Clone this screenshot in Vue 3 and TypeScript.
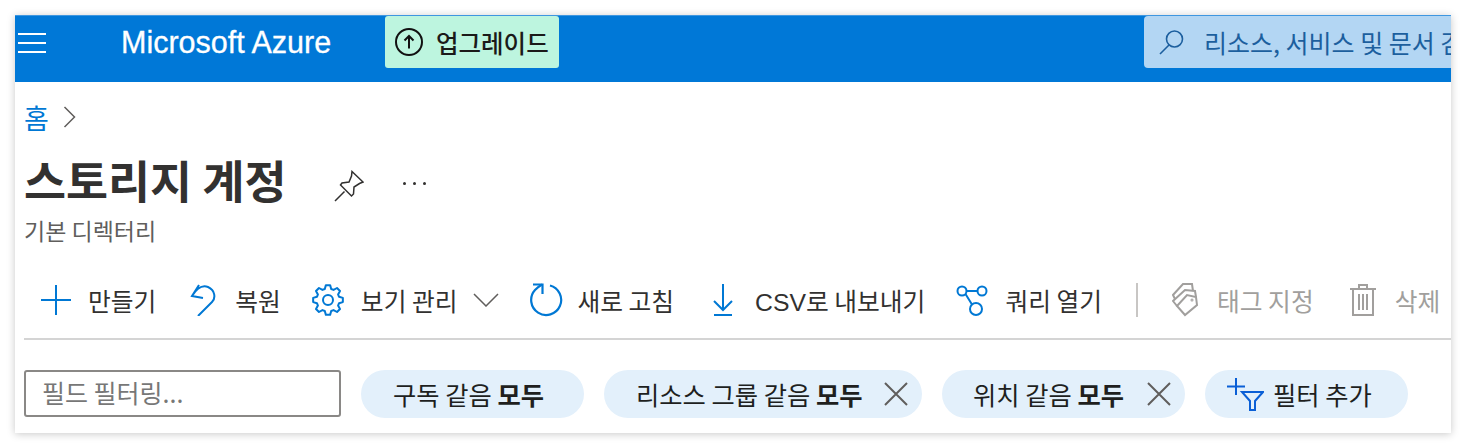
<script setup lang="ts">
function gear(cx: number, cy: number): string {
  const teeth = 8
  const outer = 15
  const inner = 11.5
  const pts: string[] = []
  for (let i = 0; i < teeth; i++) {
    const a = (i * Math.PI * 2) / teeth - Math.PI / 2
    const step = (Math.PI * 2) / teeth
    const list: [number, number][] = [
      [inner, a - step * 0.36],
      [outer, a - step * 0.18],
      [outer, a + step * 0.18],
      [inner, a + step * 0.36]
    ]
    for (const [r, t] of list) {
      pts.push(`${(cx + r * Math.cos(t)).toFixed(2)} ${(cy + r * Math.sin(t)).toFixed(2)}`)
    }
  }
  return 'M' + pts.join('L') + 'Z'
}
const gearPath = gear(17, 17)
</script>

<template>
  <div class="page">
    <div class="panel">
      <header class="topbar">
        <div class="burger"><span></span><span></span><span></span></div>
        <div class="brand">Microsoft Azure</div>
        <div class="upgrade">
          <svg width="30" height="30" viewBox="0 0 30 30" fill="none" stroke="#111" stroke-width="2">
            <circle cx="15" cy="15" r="13" />
            <path d="M15 21.5V9.5M10.5 13.5L15 9l4.500 4.500" />
          </svg>
          <span>업그레이드</span>
        </div>
        <div class="search">
          <svg width="26" height="26" viewBox="0 0 26 26" fill="none" stroke="#1c5f9e" stroke-width="1.600">
            <circle cx="15.500" cy="10" r="8" />
            <path d="M10 16L1 25" />
          </svg>
          <span>리소스, 서비스 및 문서 검색(G+/)</span>
        </div>
      </header>

      <nav class="crumbs">
        <a>홈</a>
        <svg width="13" height="22" viewBox="0 0 13 22" fill="none" stroke="#605e5c" stroke-width="1.500">
          <path d="M1.500 1L11.500 11L1.500 21" />
        </svg>
      </nav>

      <div class="title-row">
        <h1>스토리지 계정</h1>
        <svg class="pin" width="30" height="32" viewBox="0 0 30 32" fill="none" stroke="#323130" stroke-width="1.500">
          <path d="M1 31L10.500 21.500M18 1.500L29 12L25.500 13.500L20 17L19.500 24L17.500 26L6.500 15L8 13L15 12L17.500 6Z" />
        </svg>
        <div class="dots"><i></i><i></i><i></i></div>
      </div>
      <div class="subtitle">기본 디렉터리</div>

      <div class="toolbar">
        <button class="tool create">
          <svg width="32" height="32" viewBox="0 0 32 32" fill="none" stroke="#0078d4" stroke-width="2">
            <path d="M16 1V31M1 16H31" />
          </svg>
          <span>만들기</span>
        </button>
        <button class="tool restore">
          <svg width="28" height="32" viewBox="0 0 28 32" fill="none" stroke="#0078d4" stroke-width="2">
            <path d="M10 1L3 12L14 14M3 12C8 4 14 1 19 3C26 6 27 14 23 18L9 32" />
          </svg>
          <span>복원</span>
        </button>
        <button class="tool views">
          <svg width="34" height="34" viewBox="0 0 34 34" fill="none" stroke="#0078d4" stroke-width="2">
            <path :d="gearPath" stroke-linejoin="round" />
            <circle cx="17" cy="17" r="5" />
          </svg>
          <span>보기 관리</span>
          <svg width="26" height="14" viewBox="0 0 26 14" fill="none" stroke="#605e5c" stroke-width="1.500">
            <path d="M1 1L13 13L25 1" />
          </svg>
        </button>
        <button class="tool refresh">
          <svg width="34" height="34" viewBox="0 0 34 34" fill="none" stroke="#0078d4" stroke-width="2.200">
            <path d="M21 2.500A15 15 0 1 1 6 7C8 5 10.500 3 13 1.500" />
            <path d="M4 1.500H13.500V11" />
          </svg>
          <span>새로 고침</span>
        </button>
        <button class="tool export">
          <svg width="20" height="32" viewBox="0 0 20 32" fill="none" stroke="#0078d4" stroke-width="2">
            <path d="M10 0V26M1 17L10 26L19 17" />
            <path d="M1 31H19" />
          </svg>
          <span><span class="latin">CSV</span>로 내보내기</span>
        </button>
        <button class="tool query">
          <svg width="34" height="34" viewBox="0 0 34 34" fill="none" stroke="#0078d4" stroke-width="2">
            <circle cx="7" cy="8" r="4.500" />
            <circle cx="27" cy="8" r="4.500" />
            <circle cx="21" cy="26" r="6" />
            <path d="M11.500 8H22.500M10.500 11L17 21.500" />
          </svg>
          <span>쿼리 열기</span>
        </button>
        <i class="vsep"></i>
        <button class="tool off tag">
          <svg width="28" height="34" viewBox="0 0 28 34" fill="none" stroke="#a19f9d" stroke-width="2">
            <path d="M5 23L15 12L24 14L25 22L13 32Z" />
            <path d="M5 23L1 18L13 7L23 8L24 14" />
            <path d="M3 16L1 12L11 1L20 1L21 8" />
            <circle cx="20" cy="17" r="0.500" />
          </svg>
          <span>태그 지정</span>
        </button>
        <button class="tool off trash">
          <svg width="26" height="32" viewBox="0 0 26 32" fill="none" stroke="#a19f9d" stroke-width="2">
            <path d="M0 5H26M9 5V1H17V5M3 5V31H23V5M9 10V26M13 10V26M17 10V26" />
          </svg>
          <span>삭제</span>
        </button>
      </div>

      <div class="filters">
        <div class="field">필드 필터링...</div>
        <div class="pill p1">구독 같음&nbsp;<b>모두</b></div>
        <div class="pill p2">
          <span>리소스 그룹 같음&nbsp;<b>모두</b></span>
          <svg width="24" height="24" viewBox="0 0 24 24" fill="none" stroke="#605e5c" stroke-width="2">
            <path d="M1 1L23 23M23 1L1 23" />
          </svg>
        </div>
        <div class="pill p3">
          <span>위치 같음&nbsp;<b>모두</b></span>
          <svg width="24" height="24" viewBox="0 0 24 24" fill="none" stroke="#605e5c" stroke-width="2">
            <path d="M1 1L23 23M23 1L1 23" />
          </svg>
        </div>
        <div class="pill p4">
          <svg width="37" height="33" viewBox="0 0 37 33" fill="none" stroke="#0a5fd6" stroke-width="2">
            <path d="M9 0V17M0 8.500H18" />
            <path d="M15 14H36L28 23V32H23V23Z" />
          </svg>
          <span>필터 추가</span>
        </div>
      </div>
    </div>
  </div>
</template>

<style>
body {
  margin: 0;
  background: #fff;
}
</style>

<style scoped>
.page {
  padding: 15px;
  width: 1436px;
  height: 418px;
  font-family: "Noto Sans CJK KR", "Liberation Sans", sans-serif;
  color: #323130;
}
.panel {
  width: 1436px;
  height: 418px;
  overflow: hidden;
  background: #fff;
  box-shadow: 0 1px 8px rgba(0, 0, 0, 0.22);
}
.topbar {
  height: 67px;
  box-sizing: border-box;
  background: #0078d7;
  border-top: 1px solid #3f97e0;
  display: flex;
  align-items: flex-start;
}
.topbar > * {
  flex: none;
}
.burger {
  width: 28px;
  margin: 17px 0 0 3px;
  display: flex;
  flex-direction: column;
  gap: 7px;
}
.burger span {
  height: 2px;
  background: #fff;
}
.brand {
  margin: 7px 0 0 75px;
  width: 264px;
  font: 30.500px/38px "Liberation Sans", sans-serif;
  -webkit-text-stroke: 0.3px #fff;
  color: #fff;
  white-space: nowrap;
}
.upgrade {
  box-sizing: border-box;
  width: 174px;
  height: 52px;
  background: #bdf5df;
  border-radius: 3px;
  display: flex;
  align-items: center;
  padding-left: 9px;
  gap: 12px;
  font-size: 24.500px;
  font-weight: 500;
  color: #1b1a19;
  white-space: nowrap;
}
.search {
  margin-left: 585px;
  width: 420px;
  height: 52px;
  background: #b3d6f3;
  border-radius: 4px 0 0 4px;
  display: flex;
  align-items: center;
  padding-left: 15px;
  gap: 19px;
  font-size: 25px;
  color: #1c5f9e;
  white-space: nowrap;
}
.crumbs {
  height: 50px;
  display: flex;
  align-items: center;
  padding-left: 9px;
  gap: 14px;
  color: #0078d4;
  font-size: 27px;
  margin-top: 10px;
}
.title-row {
  height: 48px;
  padding-left: 9px;
  margin-top: 13px;
  display: flex;
  align-items: center;
}
h1 {
  margin: 0;
  font-size: 45.700px;
  line-height: 48px;
  font-weight: 700;
  white-space: nowrap;
}
.pin {
  margin-left: 47px;
  margin-top: 13px;
}
.dots {
  margin-left: 39px;
  margin-top: 8px;
  display: flex;
  gap: 7px;
}
.dots i {
  width: 3px;
  height: 3px;
  border-radius: 50%;
  background: #323130;
}
.subtitle {
  margin: 11px 0 0 9px;
  font-size: 23px;
  line-height: 32px;
  color: #605e5c;
}
.toolbar {
  height: 40px;
  margin-top: 34px;
  display: flex;
  align-items: center;
}
.tool {
  all: unset;
  display: flex;
  align-items: center;
  gap: 16px;
  font-size: 24.750px;
  white-space: nowrap;
  font-family: inherit;
}
.latin {
  font-family: "Liberation Sans", sans-serif;
}
.create { margin-left: 25px; }
.restore { margin-left: 33px; gap: 18px; }
.views { margin-left: 30px; }
.refresh { margin-left: 30px; gap: 14px; }
.export { margin-left: 39px; gap: 22px; }
.query { margin-left: 30px; }
.vsep {
  width: 2px;
  height: 34px;
  background: #c8c6c4;
  margin-left: 34px;
}
.off { color: #a19f9d; }
.tag { margin-left: 34px; gap: 17px; }
.trash { margin-left: 36px; gap: 19px; }
.filters {
  margin: 18px 0 0 9px;
  border-top: 2px solid #d4d4d4;
  padding-top: 30px;
  display: flex;
  align-items: flex-start;
  gap: 20px;
}
.field {
  box-sizing: border-box;
  width: 317px;
  height: 47px;
  border: 2px solid #8a8886;
  border-radius: 3px;
  padding-left: 16px;
  line-height: 41px;
  font-size: 25px;
  color: #777;
}
.pill {
  box-sizing: border-box;
  height: 48px;
  border-radius: 24px;
  background: #e3f0fb;
  display: flex;
  align-items: center;
  font-size: 25.300px;
  color: #201f1e;
  white-space: nowrap;
}
.pill b { font-weight: 700; }
.p1 { width: 223px; padding-left: 32px; }
.p2 { width: 318px; padding-left: 32px; gap: 22px; }
.p3 { width: 243px; padding-left: 31px; gap: 23px; }
.p4 { width: 203px; padding-left: 22px; gap: 9px; }
</style>
